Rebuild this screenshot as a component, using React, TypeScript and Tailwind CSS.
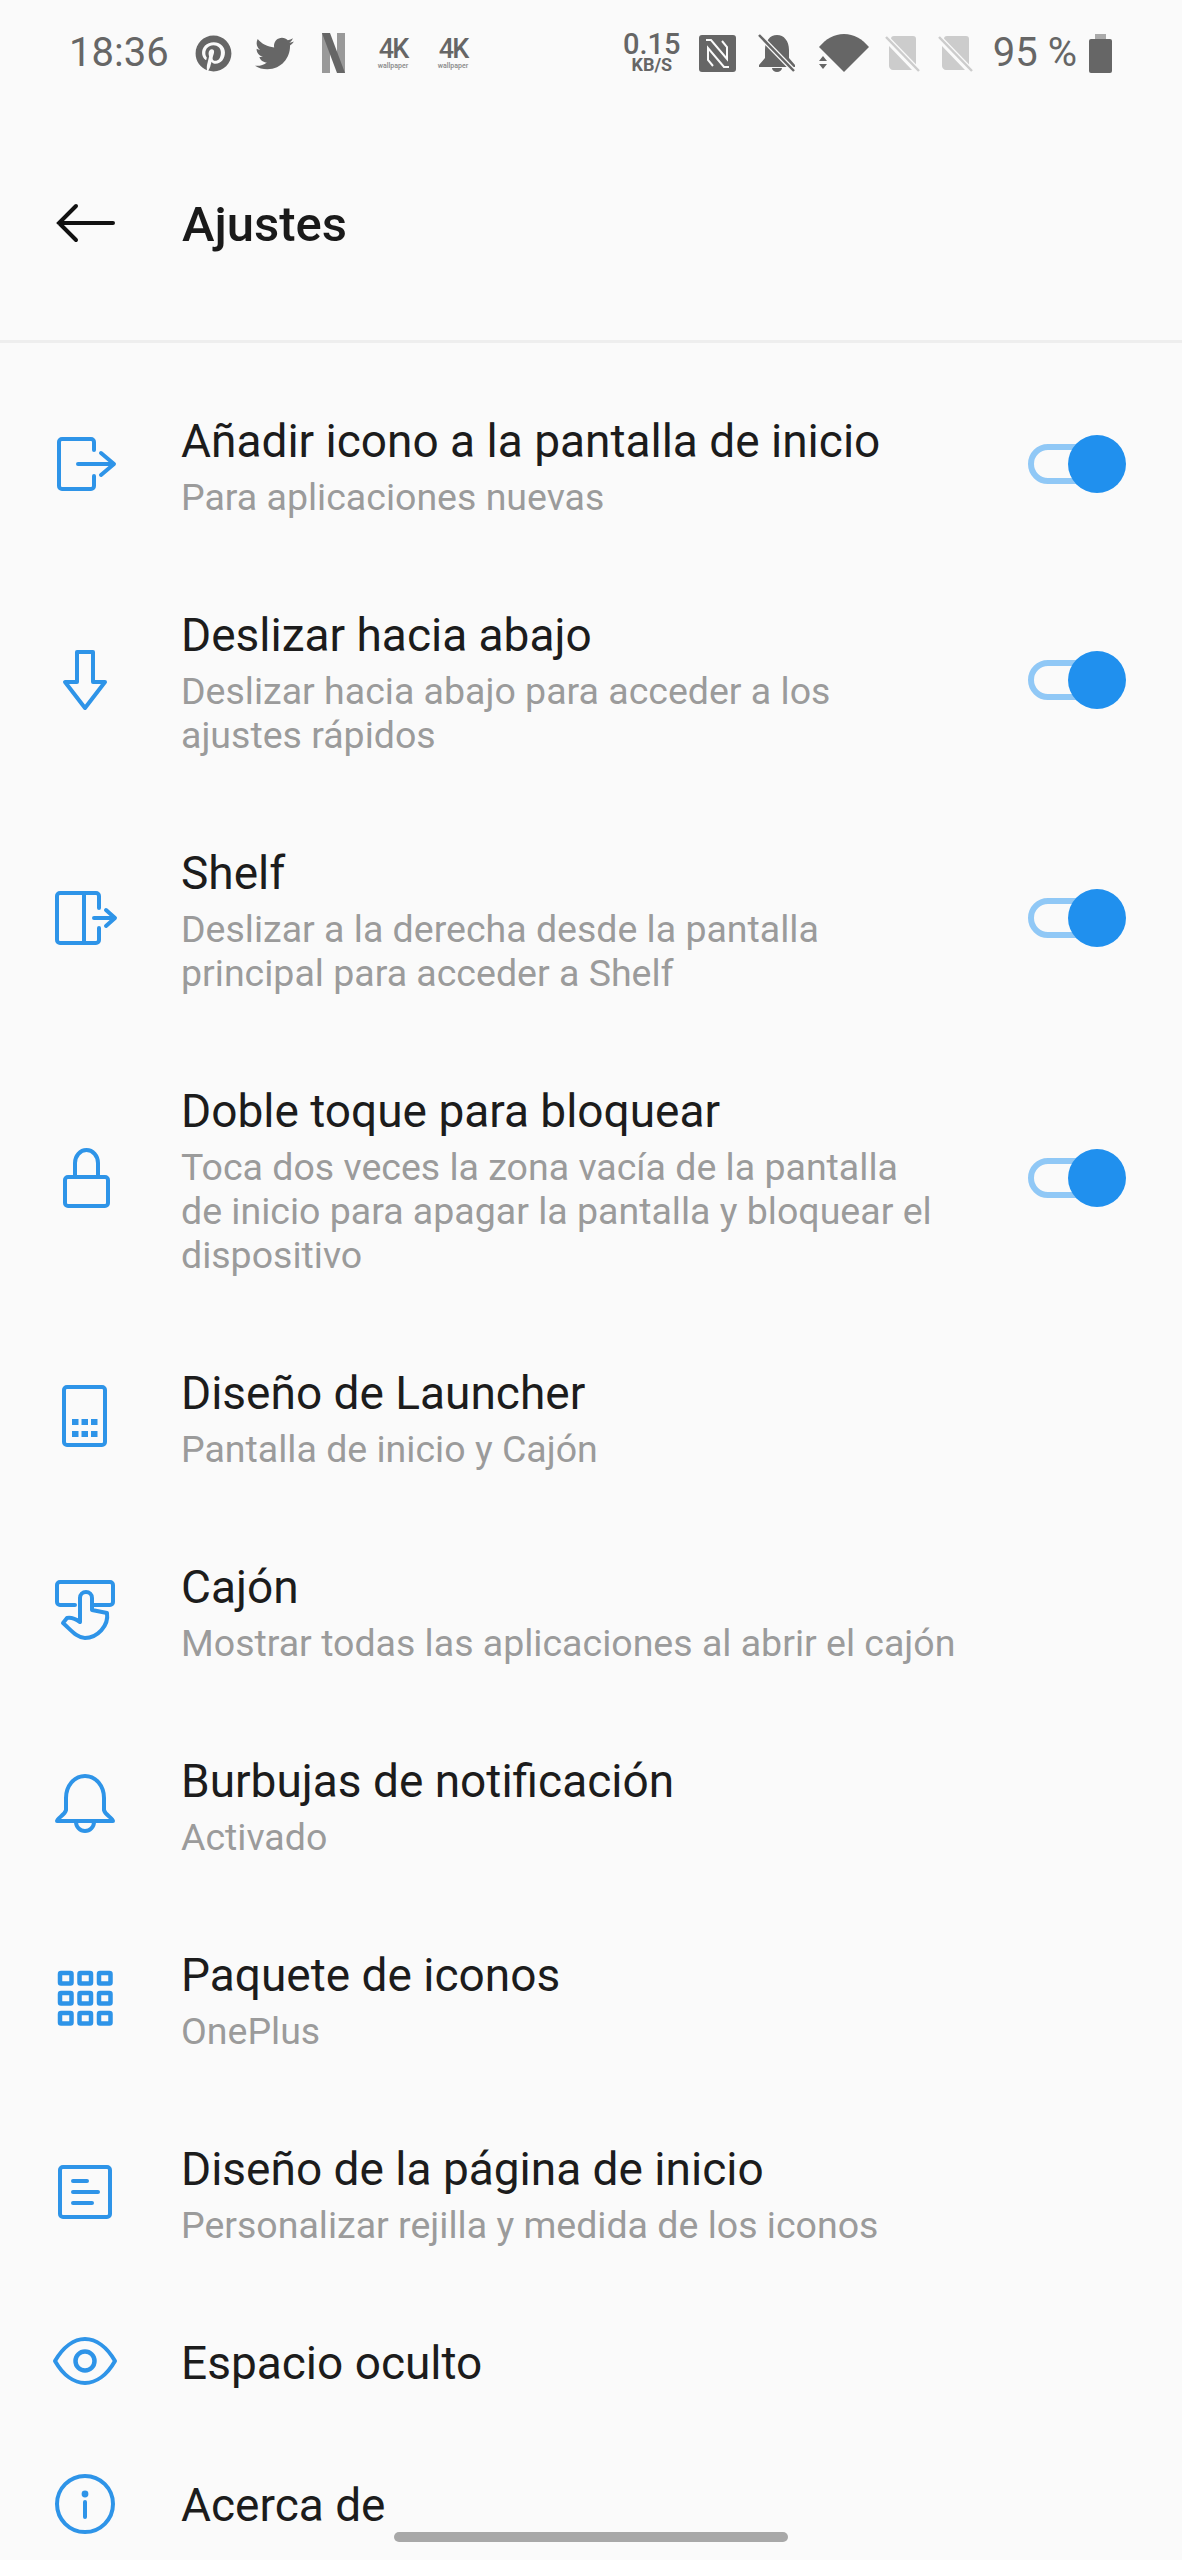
import type { ReactNode } from "react";
import { FaPinterest, FaTwitter } from "react-icons/fa";

const BLUE = "#2e94e8";
const GRAY = "#666666";
const LIGHT = "#cccccc";

function Icon({ children }: { children: ReactNode }) {
  return (
    <svg
      width="72"
      height="72"
      viewBox="0 0 72 72"
      fill="none"
      stroke={BLUE}
      strokeWidth="4"
      strokeLinecap="round"
      strokeLinejoin="round"
      className="shrink-0"
    >
      {children}
    </svg>
  );
}

const icons = {
  exit: (
    <Icon>
      <path d="M45 22V14a3 3 0 0 0-3-3H13a3 3 0 0 0-3 3V58a3 3 0 0 0 3 3H42a3 3 0 0 0 3-3V48" />
      <path d="M29 36H64M52 25L65 36L52 47" />
    </Icon>
  ),
  down: (
    <Icon>
      <path d="M28 8H44V38H56L36 64L16 38H28Z" />
    </Icon>
  ),
  shelf: (
    <Icon>
      <path d="M50 26V14a3 3 0 0 0-3-3H11a3 3 0 0 0-3 3V58a3 3 0 0 0 3 3H47a3 3 0 0 0 3-3V46" />
      <path d="M35 11V61M45 36H65M57 28L66 36L57 44" />
    </Icon>
  ),
  lock: (
    <Icon>
      <rect x="16" y="35" width="43" height="29" rx="3" />
      <path d="M26 35V21a11.5 13 0 0 1 23 0V35" />
    </Icon>
  ),
  launcher: (
    <Icon>
      <rect x="15" y="7" width="41" height="58" rx="3" />
      <g fill={BLUE} stroke="none">
        <rect x="23" y="39" width="6.5" height="6" />
        <rect x="32.5" y="39" width="6.5" height="6" />
        <rect x="42" y="39" width="6.5" height="6" />
        <rect x="23" y="51" width="6.5" height="6" />
        <rect x="32.5" y="51" width="6.5" height="6" />
        <rect x="42" y="51" width="6.5" height="6" />
      </g>
    </Icon>
  ),
  drawer: (
    <Icon>
      <path d="M26 31H11a3 3 0 0 1-3-3V11a3 3 0 0 1 3-3H61a3 3 0 0 1 3 3V28a3 3 0 0 1-3 3H45" />
      <path d="M31 48V24a6 6 0 0 1 12 0V36L58 39C60 52 48 64 36 64C28 64 22 56 14 49L18 44Q24 43 31 48Z" />
    </Icon>
  ),
  bell: (
    <Icon>
      <path d="M8 53C8 50 16 47 17 42V30C17 18 25 8 36 8C47 8 55 18 55 30V42C56 47 64 50 64 53Z" />
      <path d="M27 54a9 9 0 0 0 18 0" />
    </Icon>
  ),
  grid: (
    <Icon>
      <g strokeWidth="4.5">
        {[11, 30.5, 50].map((x) =>
          [11, 31, 51].map((y) => (
            <rect key={`${x}-${y}`} x={x} y={y} width="11.5" height="10.5" rx="1" />
          ))
        )}
      </g>
    </Icon>
  ),
  page: (
    <Icon>
      <rect x="11" y="11" width="50" height="50" rx="3" />
      <path d="M24 25H38M24 36H49M24 47H43" />
    </Icon>
  ),
  eye: (
    <Icon>
      <g transform="translate(0 -2)">
        <path d="M6 36C14 22 25 14 36 14C47 14 58 22 66 36C58 50 47 58 36 58C25 58 14 50 6 36Z" />
        <circle cx="36" cy="36" r="9.5" strokeWidth="4.5" />
      </g>
    </Icon>
  ),
  info: (
    <Icon>
      <circle cx="36" cy="36" r="28" />
      <circle cx="36" cy="26" r="3.4" fill={BLUE} stroke="none" />
      <path d="M36 34V49" />
    </Icon>
  ),
};

function FourK({ className }: { className: string }) {
  return (
    <svg width="34" height="34" viewBox="0 0 34 34" fill={GRAY} className={`overflow-visible ${className}`}>
      <text x="17" y="22" textAnchor="middle" fontFamily="Roboto, sans-serif" fontSize="27" fontWeight="500" letterSpacing="-2">
        4K
      </text>
      <text x="17" y="32" textAnchor="middle" fontFamily="Roboto, sans-serif" fontSize="7" fontWeight="500" fill="#888888">
        wallpaper
      </text>
    </svg>
  );
}

function SimOff({ className }: { className: string }) {
  return (
    <svg width="35" height="37" viewBox="0 0 35 37" className={className}>
      <path d="M6 4C6 2 7 1 9 1H28C30 1 31 2 31 4V34L6 8Z M4 11L27 35H8C6 35 4 33 4 31Z" fill={LIGHT} />
      <path d="M1 2L34 36" stroke="#fafafa" strokeWidth="5" />
      <path d="M1 2L34 36" stroke={LIGHT} strokeWidth="2.5" />
    </svg>
  );
}

function StatusBar() {
  return (
    <div className="flex h-[106px] items-center justify-between pl-[69px] pr-[70px] text-[#666666]">
      <div className="flex items-center">
        <span className="text-[40px] leading-none">18:36</span>
        <FaPinterest className="ml-[26px] text-[37px]" />
        <FaTwitter className="ml-[23px] text-[39px]" />
        <svg width="23" height="40" viewBox="0 0 23 40" className="ml-[28px]">
          <rect x="0" y="0" width="8" height="40" fill="#999999" />
          <rect x="15" y="0" width="8" height="40" fill="#999999" />
          <path d="M0 0H8L23 40H15Z" fill={GRAY} />
        </svg>
        <FourK className="ml-[31px]" />
        <FourK className="ml-[26px]" />
      </div>
      <div className="flex items-center">
        <div className="flex w-[52px] flex-col items-center">
          <span className="text-[29px] font-medium leading-[24px]">0.15</span>
          <span className="text-[18px] font-bold leading-[18px]">KB/S</span>
        </div>
        <svg width="37" height="37" viewBox="0 0 37 37" className="ml-[21px]">
          <rect width="37" height="37" rx="3" fill={GRAY} />
          <path d="M7 5H12L28 24V12L23 6M30 32H25L9 13V25L14 31" fill="none" stroke="#fafafa" strokeWidth="2" />
        </svg>
        <svg width="38" height="38" viewBox="0 0 38 38" className="ml-[22px]">
          <path d="M7 24V16C7 7 12 1 19 1C26 1 31 7 31 16V24L37 31V33H1V31Z" fill={GRAY} />
          <path d="M14 34a5 4 0 0 0 10 0Z" fill={GRAY} />
          <path d="M1 1L36 37" stroke="#fafafa" strokeWidth="5" />
          <path d="M1 1L36 37" stroke={GRAY} strokeWidth="2.5" />
        </svg>
        <svg width="52" height="38" viewBox="0 0 52 38" className="ml-[22px]">
          <path d="M1 13C8 5 16 0 26 0C36 0 44 5 51 13L26 38L14 26Z" fill={GRAY} />
          <path d="M1 27L5 22L9 27ZM1 30H9L5 35Z" fill={GRAY} />
        </svg>
        <SimOff className="ml-[15px]" />
        <SimOff className="ml-[18px]" />
        <span className="ml-[20px] text-[40px] leading-none">95 %</span>
        <svg width="23" height="39" viewBox="0 0 23 39" className="ml-[12px]">
          <rect x="6" y="0" width="11" height="6" fill="#aaaaaa" />
          <rect x="0" y="5" width="23" height="34" rx="2" fill={GRAY} />
        </svg>
      </div>
    </div>
  );
}

function Toggle() {
  return (
    <div className="relative flex h-[58px] w-[98px] shrink-0 items-center">
      <div className="h-[40px] w-[76px] rounded-full border-[6px] border-[#90c8f6]" />
      <div className="absolute right-0 top-0 h-[58px] w-[58px] rounded-full bg-[#2090ee]" />
    </div>
  );
}

type Row = {
  icon: ReactNode;
  title: string;
  sub?: string;
  toggle?: boolean;
  pad?: string;
  shift?: string;
};

const rows: Row[] = [
  { icon: icons.exit, title: "Añadir icono a la pantalla de inicio", sub: "Para aplicaciones nuevas", toggle: true },
  { icon: icons.down, title: "Deslizar hacia abajo", sub: "Deslizar hacia abajo para acceder a los ajustes rápidos", toggle: true },
  { icon: icons.shelf, title: "Shelf", sub: "Deslizar a la derecha desde la pantalla principal para acceder a Shelf", toggle: true },
  { icon: icons.lock, title: "Doble toque para bloquear", sub: "Toca dos veces la zona vacía de la pantalla de inicio para apagar la pantalla y bloquear el dispositivo", toggle: true },
  { icon: icons.launcher, title: "Diseño de Launcher", sub: "Pantalla de inicio y Cajón" },
  { icon: icons.drawer, title: "Cajón", sub: "Mostrar todas las aplicaciones al abrir el cajón" },
  { icon: icons.bell, title: "Burbujas de notificación", sub: "Activado" },
  { icon: icons.grid, title: "Paquete de iconos", sub: "OnePlus" },
  { icon: icons.page, title: "Diseño de la página de inicio", sub: "Personalizar rejilla y medida de los iconos" },
  { icon: icons.eye, title: "Espacio oculto", pad: "py-[38px]" },
  { icon: icons.info, title: "Acerca de", pad: "pt-[30px]", shift: "mt-[3px]" },
];

export default function App() {
  return (
    <div className="relative h-[2560px] w-[1182px] overflow-hidden bg-[#fafafa] font-['Roboto',sans-serif]">
      <StatusBar />

      <div className="flex h-[237px] items-center border-b-[3px] border-[#eeeeee] pl-[54px]">
        <svg width="64" height="40" viewBox="0 0 64 40" fill="none" stroke="#111111" strokeWidth="4" strokeLinecap="round" className="shrink-0">
          <path d="M5 20H59M22 3L5 20L22 37" />
        </svg>
        <h1 className="ml-[64px] mt-[3px] text-[49px] font-medium leading-none text-[#1a1a1a]">Ajustes</h1>
      </div>

      <div className="pt-[24px]">
        {rows.map((r) => (
          <div key={r.title} className={`flex items-center pl-[49px] pr-[56px] ${r.pad ?? "py-[39px]"}`}>
            {r.icon}
            <div className={`ml-[60px] ${r.toggle ? "w-[765px]" : "flex-1"} ${r.sub ? "mb-[3px]" : ""} ${r.shift ?? ""}`}>
              <div className={`text-[46px] text-[#1c1c1c] ${r.sub ? "pt-[2px] leading-[67px]" : "leading-[70px]"}`}>{r.title}</div>
              {r.sub && <div className="text-[37.5px] leading-[44px] text-[#9b9b9b]">{r.sub}</div>}
            </div>
            {r.toggle && (
              <div className="ml-auto">
                <Toggle />
              </div>
            )}
          </div>
        ))}
      </div>

      <div className="absolute bottom-[18px] left-[394px] h-[10px] w-[394px] rounded-full bg-[#a8a8a8]" />
    </div>
  );
}
